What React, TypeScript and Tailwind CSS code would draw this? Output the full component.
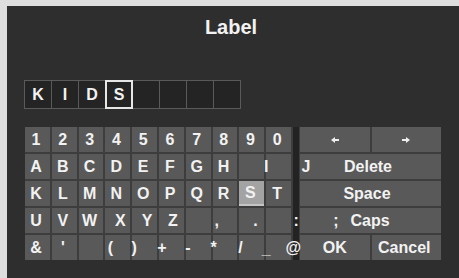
import React from "react";

type Cell = { t: string; off: string; cls?: string; lab?: string; t2?: string; off2?: string };

const N = "ml-[11px]";
const mk = (s: string[]): Cell[] => s.map((t) => ({ t, off: N }));

const rows: Cell[][] = [
  mk(["1", "2", "3", "4", "5", "6", "7", "8", "9", "0"]),
  [...mk(["A", "B", "C", "D", "E", "F", "G", "H", ""]), { t: "I", off: "ml-[0px]" }],
  [
    ...mk(["K", "L", "M", "N", "O", "P", "Q", "R"]),
    { t: "S", off: N, cls: "bg-[#a3a3a3] border-b-2 border-[#c4c4c4]" },
    { t: "T", off: N },
  ],
  [
    ...mk(["U", "V", "W"]),
    { t: "X", off: "ml-[15px]" },
    { t: "Y", off: "ml-[15px]" },
    { t: "Z", off: "ml-[14px]" },
    { t: "", off: N },
    { t: ",", off: "ml-[4px]" },
    { t: ".", off: "ml-[16px]" },
    { t: ":", off: "ml-[30px]" },
  ],
  [
    ...mk(["&", "'", ""]),
    { t: "(", off: "ml-[5px]" },
    { t: ")", off: "ml-[2px]" },
    { t: "+", off: "ml-[3px]" },
    { t: "-", off: "ml-[2px]" },
    { t: "*", off: "ml-[1px]" },
    { t: "/", off: "ml-[1px]" },
    { t: "_", off: "ml-[0px]", lab: "translate-y-[1px]", t2: "@", off2: "ml-[27px]" },
  ],
];

const font = { fontFamily: '"Liberation Sans", Arial, Helvetica, sans-serif' };

function Arrow({ dir }: { dir: "l" | "r" }) {
  return (
    <svg width="8" height="6" viewBox="0 0 8 6" className={dir === "r" ? "rotate-180" : ""}>
      <path d="M0 3 L4 0 L4 2 L8 2 L8 4 L4 4 L4 6 Z" fill="#eeeeee" />
    </svg>
  );
}

export default function App() {
  const letters = ["K", "I", "D", "S", "", "", "", ""];
  return (
    <div
      className="w-[459px] h-[278px] bg-[#dedede] pt-[6px] pl-[7px] flex overflow-hidden"
      style={font}
    >
      <div className="flex-1 bg-[#2e2e2e] flex flex-col text-[#f2f2f2] font-bold">
        <div className="mt-[9px] text-center text-[20px] leading-[24px] pr-[4px]">Label</div>

        <div className="mt-[41px] ml-[17px] flex">
          {letters.map((l, i) => (
            <div
              key={i}
              className={
                i === 3
                  ? "relative -ml-px w-[28px] h-[29px] border-2 border-[#e6e6e6] bg-[#242424] flex items-center justify-center text-[16px]"
                  : i === 0
                  ? "w-[28px] h-[29px] border border-[#5a5a5a] bg-[#242424] flex items-center justify-center text-[16px]"
                  : "-ml-px w-[28px] h-[29px] border border-[#5a5a5a] bg-[#242424] flex items-center justify-center text-[16px]"
              }
            >
              {l}
            </div>
          ))}
        </div>

        <div className="mt-[18px] ml-[18px] flex h-[133px] text-[16px]">
          <div className="w-[266px] grid grid-cols-10 grid-rows-5 gap-[2px] bg-[#3d3d3d]">
            {rows.flat().map((c, i) => (
              <div
                key={i}
                className={"flex items-center bg-[#595959] " + (c.cls ? c.cls : "")}
              >
                <span className={c.off + " relative w-0 flex justify-center whitespace-nowrap " + (c.lab ?? "")}>
                  {c.t}
                </span>
                {c.t2 ? (
                  <span className={c.off2 + " relative w-0 flex justify-center whitespace-nowrap"}>
                    {c.t2}
                  </span>
                ) : null}
              </div>
            ))}
          </div>
          <div className="w-[9px] bg-[#232323] border-l-2 border-r border-[#3d3d3d]"></div>
          <div className="w-[141px] grid grid-cols-2 grid-rows-5 gap-[2px] bg-[#3d3d3d]">
            <div className="bg-[#595959] flex items-center justify-center">
              <Arrow dir="l" />
            </div>
            <div className="bg-[#595959] flex items-center justify-center">
              <Arrow dir="r" />
            </div>
            <div className="col-span-2 bg-[#595959] flex items-center">
              <span className="ml-[6px] w-0 flex justify-center">J</span>
              <span className="flex-1 text-center pr-[11px]">Delete</span>
            </div>
            <div className="col-span-2 bg-[#595959] flex items-center justify-center pr-[7px]">
              Space
            </div>
            <div className="col-span-2 bg-[#595959] flex items-center">
              <span className="ml-[36px] w-0 flex justify-center">;</span>
              <span className="flex-1 text-center pr-[37px]">Caps</span>
            </div>
            <div className="bg-[#595959] flex items-center justify-center">OK</div>
            <div className="bg-[#595959] flex items-center justify-center pr-[4px]">Cancel</div>
          </div>
        </div>
      </div>
    </div>
  );
}
